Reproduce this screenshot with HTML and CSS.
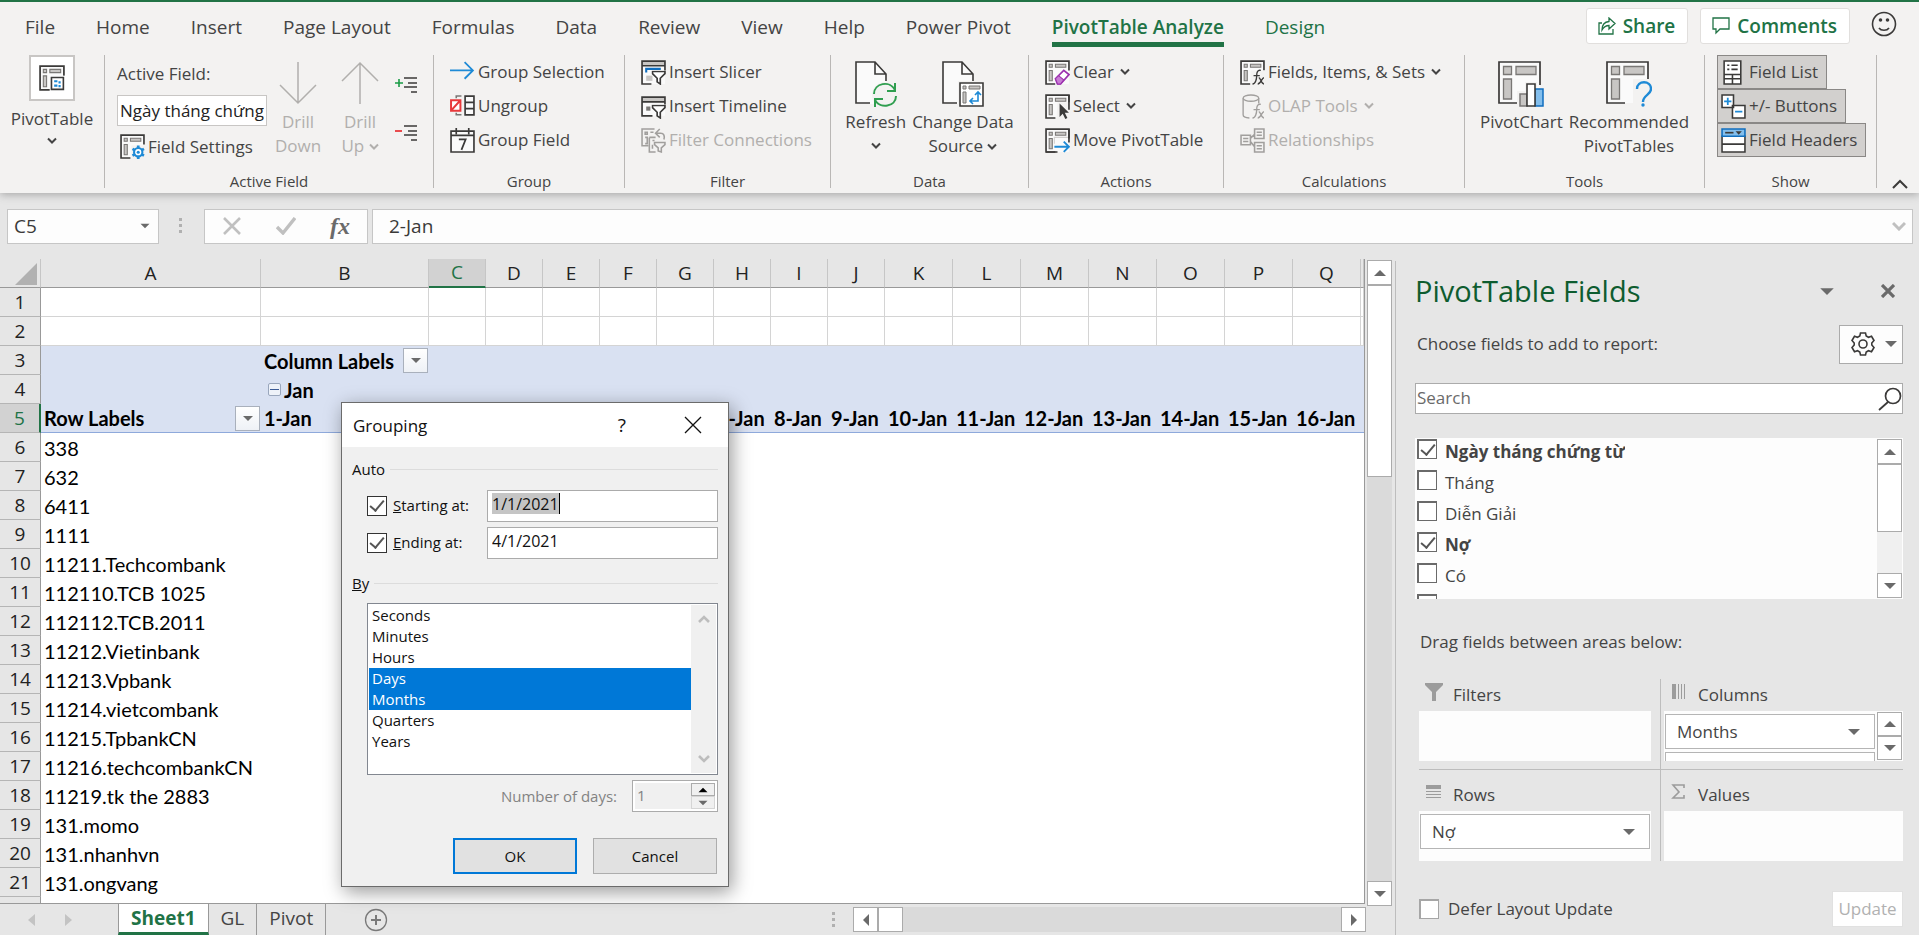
FILE: index.html
```html
<!DOCTYPE html>
<html lang="en">
<head>
<meta charset="utf-8">
<title>Sheet1 - PivotTable</title>
<link rel="stylesheet" href="styles.css">
</head>
<body>
<svg class="defs" aria-hidden="true">
  <symbol id="chev" viewBox="0 0 10 8"><path d="M1 1.5 5 5.5 9 1.5" fill="none" stroke="currentColor" stroke-width="2"/></symbol>
  <symbol id="pivot" viewBox="0 0 24 24"><path d="M1 1h22v22H1z" fill="#fafafa"/><path d="M23 10V1H1v22h9" fill="none" stroke="#3b3a39" stroke-width="1.6"/><path d="M4 4h3v3H4zM10 4h10v3H10zM4 10h3v10H4z" fill="#c8c6c4" stroke="#797775"/></symbol>
  <symbol id="sheet" viewBox="0 0 42 46"><path d="M1 1h20l10 12v30H1z" fill="#fafafa"/><path d="M31 20V13L20 1H1v41h14M20 1v12h11" fill="none" stroke="#3b3a39" stroke-width="1.6"/></symbol>
  <symbol id="bigpivot" viewBox="0 0 46 46"><path d="M1 1h41v41H1z" fill="#fafafa"/><path d="M42 24V1H1v41h18" fill="none" stroke="#3b3a39" stroke-width="1.7"/><path d="M5.500 5.500h8v8h-8zM18 5.500h20v8H18zM5.500 18h8v20h-8z" fill="#c8c6c4" stroke="#797775" stroke-width="1.300"/></symbol>
  <symbol id="funnel" viewBox="0 0 14 14"><path d="M1 1h12v2L8.500 7.500V13L5.500 11V7.500L1 3z" fill="#fff" stroke="#3b3a39" stroke-width="1.600"/></symbol>
  <symbol id="tri" viewBox="0 0 12 8"><path d="M0 1h12L6 7z" fill="currentColor"/></symbol>
</svg>

<header class="ribbon">
  <nav class="tabs">
    <a href="#">File</a><a href="#">Home</a><a href="#">Insert</a><a href="#">Page Layout</a><a href="#">Formulas</a><a href="#">Data</a><a href="#">Review</a><a href="#">View</a><a href="#">Help</a><a href="#">Power Pivot</a><a href="#" class="active">PivotTable Analyze</a><a href="#" class="ctx">Design</a>
    <div class="tab-actions">
      <button class="pill"><svg width="18" height="18" viewBox="0 0 18 18" fill="none" stroke="#217346" stroke-width="1.300"><path d="M4 6H1v11h14v-5"/><path d="M11 1v3.500C6 5 4 8 4 13c2-3.500 4-4.500 7-4.500V12l6-5.500z"/></svg>Share</button>
      <button class="pill"><svg width="18" height="18" viewBox="0 0 18 18" fill="none" stroke="#217346" stroke-width="1.300"><path d="M1 1h16v11H8l-4 4v-4H1z"/></svg>Comments</button>
      <button class="smile" aria-label="Feedback"><svg width="26" height="26" viewBox="0 0 26 26" fill="none" stroke="#3b3a39" stroke-width="1.600"><circle cx="13" cy="13" r="11.500"/><path d="M8 17c2 3 8 3 10 0"/><circle cx="9.500" cy="9" r="1" fill="#3b3a39"/><circle cx="16.500" cy="9" r="1" fill="#3b3a39"/></svg></button>
    </div>
  </nav>
  <div class="groups">
    <section class="group">
      <button class="big"><span class="framed"><svg width="26" height="26" viewBox="0 0 24 24"><use href="#pivot"/><path d="M10 10h14v14H10z" fill="#fff"/><path d="M11.500 11.500h11v11h-11z" fill="#fff" stroke="#3b3a39" stroke-width="1.500"/><path d="M14 14h3v2h-3zM18 15h2v2h-2zM14 18h3v2h-3zM18 18.500h2v2h-2z" fill="#1e8ad6"/></svg></span><span>PivotTable</span><svg class="chev"><use href="#chev"/></svg></button>
    </section>
    <section class="group">
      <div class="body field-body">
        <div class="field-col">
          <label for="af">Active Field:</label>
          <input id="af" type="text" value="Ngày tháng chứng từ">
          <button class="row"><svg width="25" height="25" viewBox="0 0 24 24"><use href="#pivot"/><path d="M11 11h13v13H11z" fill="#f3f2f1"/><circle cx="17.500" cy="17.500" r="4" fill="#fff" stroke="#1e8ad6" stroke-width="2"/><circle cx="17.500" cy="17.500" r="1.500" fill="#1e8ad6"/><path d="M17.500 11v3M17.500 21v3M12 14.300l2.500 1.400M20.500 19.300l2.500 1.400M12 20.700l2.500-1.400M20.500 15.700l2.500-1.400" stroke="#1e8ad6" stroke-width="2.600"/></svg>Field Settings</button>
        </div>
        <button class="big off" disabled><svg width="38" height="44" viewBox="0 0 38 44"><path d="M19 1v41M1 24l18 18 18-18" fill="none" stroke="#b1afad" stroke-width="1.500"/></svg><span>Drill</span><span>Down</span></button>
        <button class="big off" disabled><svg width="38" height="44" viewBox="0 0 38 44"><path d="M19 43V2M1 20 19 2l18 18" fill="none" stroke="#b1afad" stroke-width="1.500"/></svg><span>Drill</span><span>Up <svg class="chev"><use href="#chev"/></svg></span></button>
        <div class="expand">
          <button aria-label="Expand Field"><svg width="22" height="18" viewBox="0 0 22 18"><path d="M9 2h13M13 7h9M9 11h13M16 16h6" stroke="#3b3a39" stroke-width="1.500"/><path d="M0 7h8M4 3v8" stroke="#1a9c46" stroke-width="1.600"/></svg></button>
          <button aria-label="Collapse Field"><svg width="22" height="18" viewBox="0 0 22 18"><path d="M9 2h13M13 7h9M9 11h13M16 16h6" stroke="#3b3a39" stroke-width="1.500"/><path d="M0 7h7" stroke="#e8393b" stroke-width="1.800"/></svg></button>
        </div>
      </div>
      <h2>Active Field</h2>
    </section>
    <section class="group">
      <div class="body stack">
        <button class="row"><svg width="25" height="25" viewBox="0 0 24 24"><path d="M0 10h22M14 2l8 8-8 8" fill="none" stroke="#1e8ad6" stroke-width="1.700"/></svg>Group Selection</button>
        <button class="row"><svg width="25" height="25" viewBox="0 0 24 24"><path d="M14.500 2h8.500v18h-8.500zM14.500 8H23M14.500 14H23" fill="#fafafa" stroke="#3b3a39" stroke-width="1.600"/><path d="M6 4V2h5M6 18v2h5" fill="none" stroke="#797775" stroke-width="1.500"/><path d="M1 6h9v10H1zM1 16 10 6" fill="#fff" stroke="#e8393b" stroke-width="1.900"/></svg>Ungroup</button>
        <button class="row"><svg width="25" height="25" viewBox="0 0 24 24"><path d="M1 3h22v20H1zM1 7h22M6 0v6M18 0v6" fill="#fafafa" stroke="#3b3a39" stroke-width="1.600"/><path d="M8.500 11H15l-4 10" fill="none" stroke="#3b3a39" stroke-width="1.700"/></svg>Group Field</button>
      </div>
      <h2>Group</h2>
    </section>
    <section class="group">
      <div class="body stack">
        <button class="row"><svg width="25" height="25" viewBox="0 0 24 24"><path d="M1 1h22v22H1z" fill="#fafafa"/><path d="M1 1h22v4H1z" fill="#c8c6c4"/><path d="M10 23H1V1h22v9M1 5.500h22" fill="none" stroke="#3b3a39" stroke-width="1.600"/><path d="M5 12V8.500h14" fill="none" stroke="#106ebe" stroke-width="2"/><path d="M5 15h6v5H5z" fill="#c8c6c4"/><use href="#funnel" x="10" y="10" width="14" height="14"/></svg>Insert Slicer</button>
        <button class="row"><svg width="25" height="25" viewBox="0 0 24 24"><path d="M1 3h22v18H1z" fill="#fafafa"/><path d="M1 3h22v4H1z" fill="#c8c6c4"/><path d="M11 21H1V3h22v7M1 7.500h22" fill="none" stroke="#3b3a39" stroke-width="1.600"/><path d="M5 12h4v4H5z" fill="#797775"/><use href="#funnel" x="10" y="10" width="14" height="14"/></svg>Insert Timeline</button>
        <button class="row off" disabled><svg width="25" height="25" viewBox="0 0 24 24" fill="none" stroke="#a19f9d" stroke-width="1.500"><path d="M7 17H1V1h12M4 4h2v2H4zM4 9h2v6H4M9 4h3M8 9h6M8 9v14h6M11 12h2M11 16v4M15 5h4c3 0 4 3 3 6M18 1l-4 4 4 4"/><path d="M13 14h10v2l-3.500 3v4l-3-1v-3L13 16z" fill="#f3f2f1"/></svg>Filter Connections</button>
      </div>
      <h2>Filter</h2>
    </section>
    <section class="group">
      <div class="body pair">
        <button class="big"><svg width="42" height="46" viewBox="0 0 42 46"><use href="#sheet"/><circle cx="30" cy="34" r="13" fill="#f3f2f1"/><path d="M19 33c0-11 16-14 21-4M40 22v8h-8M41 35c0 11-16 13-21 4M20 46v-8h8" fill="none" stroke="#2f9e4f" stroke-width="2"/></svg><span>Refresh</span><svg class="chev"><use href="#chev"/></svg></button>
        <button class="big"><svg width="42" height="46" viewBox="0 0 42 46"><use href="#sheet"/><path d="M16 20h26v26H16z" fill="#f3f2f1"/><path d="M18 22h23v23H18z" fill="#fff" stroke="#3b3a39" stroke-width="1.600"/><path d="M21 25h3v3h-3zM27 25h11v3H27zM21 31h3v11h-3z" fill="#c8c6c4" stroke="#797775"/><path d="M36 31v9h-8M33 34l3-3 3 3M31 37l-3 3 3 3" fill="none" stroke="#1e8ad6" stroke-width="1.600"/></svg><span>Change Data</span><span>Source <svg class="chev"><use href="#chev"/></svg></span></button>
      </div>
      <h2>Data</h2>
    </section>
    <section class="group">
      <div class="body stack">
        <button class="row"><svg width="25" height="25" viewBox="0 0 24 24"><use href="#pivot"/><path d="M10 18 19 9l5 5-9 10h-5z" fill="#f3f2f1"/><path d="m10 18 8-8 5 4-8 9h-3z" fill="#fff" stroke="#9b2fae" stroke-width="1.600"/><path d="m10 18 3-3 5 4-3 4h-3z" fill="#c77dd3" stroke="#9b2fae"/></svg>Clear<svg class="chev"><use href="#chev"/></svg></button>
        <button class="row"><svg width="25" height="25" viewBox="0 0 24 24"><use href="#pivot"/><path d="M12 8h12v16H11z" fill="#f3f2f1"/><path d="M23 1v14" stroke="#3b3a39" stroke-width="1.600"/><path d="M14 9v13l3-3 2.500 5 2-1-2.500-5h4z" fill="#3b3a39"/></svg>Select<svg class="chev"><use href="#chev"/></svg></button>
        <button class="row"><svg width="25" height="25" viewBox="0 0 24 24"><use href="#pivot"/><path d="M9 15V9h13" fill="none" stroke="#d2d0ce"/><path d="M23 1v13M1 23h11" stroke="#3b3a39" stroke-width="1.600"/><path d="M9 18h14M18 13l5 5-5 5" fill="none" stroke="#1e8ad6" stroke-width="1.800"/></svg>Move PivotTable</button>
      </div>
      <h2>Actions</h2>
    </section>
    <section class="group">
      <div class="body stack">
        <button class="row"><svg width="25" height="25" viewBox="0 0 24 24"><use href="#pivot"/><path d="M10 10h14v14H10z" fill="#f3f2f1"/><path d="M20 10c-3-1-4 2-4 5s-1 8-4 8M13 15h6M18 17c2 0 2 6 5 6M23 17c-2 0-3 6-6 6" fill="none" stroke="#3b3a39" stroke-width="1.300"/></svg>Fields, Items, &amp; Sets<svg class="chev"><use href="#chev"/></svg></button>
        <button class="row off" disabled><svg width="25" height="25" viewBox="0 0 24 24" fill="none" stroke="#a19f9d" stroke-width="1.300"><path d="M3 4v16c0 2 3 3 6 3M18 4v5"/><ellipse cx="10.500" cy="4" rx="7.500" ry="3"/><path d="M20 10c-3-1-4 2-4 5s-1 8-4 8M13 15h6M18 17c2 0 2 6 5 6M23 17c-2 0-3 6-6 6"/></svg>OLAP Tools<svg class="chev"><use href="#chev"/></svg></button>
        <button class="row off" disabled><svg width="25" height="25" viewBox="0 0 24 24" fill="none" stroke="#a19f9d" stroke-width="1.500"><path d="M1 7h9v9H1zM14 1h9v9h-9zM14 14h9v9h-9zM10 10l4-4M10 13l4 5M3 10h5M3 13h5M16 4h5M16 7h5M16 17h5M16 20h5"/></svg>Relationships</button>
      </div>
      <h2>Calculations</h2>
    </section>
    <section class="group">
      <div class="body pair">
        <button class="big"><svg width="46" height="46" viewBox="0 0 46 46"><use href="#bigpivot"/><path d="M19 30h8V21h12v6h7v19H19z" fill="#f3f2f1"/><path d="M22 33h7v12h-7z" fill="#c8c6c4" stroke="#797775" stroke-width="1.500"/><path d="M37 28h8v17h-8z" fill="#83beec" stroke="#106ebe" stroke-width="1.500"/><path d="M29 23h8v22h-8z" fill="#fff" stroke="#3b3a39" stroke-width="1.600"/></svg><span>PivotChart</span></button>
        <button class="big"><svg width="46" height="46" viewBox="0 0 46 46"><use href="#bigpivot"/><path d="M27 18h19v28H27z" fill="#f3f2f1"/><path d="M31 28c0-9 14-9 14 0 0 6-8 6-8 13" fill="none" stroke="#1e8ad6" stroke-width="2.400"/><circle cx="37" cy="44" r="1.700" fill="#1e8ad6"/></svg><span>Recommended</span><span>PivotTables</span></button>
      </div>
      <h2>Tools</h2>
    </section>
    <section class="group">
      <div class="body stack toggles">
        <button class="row" aria-pressed="true"><svg width="25" height="25" viewBox="0 0 24 24"><path d="M3 1h16v22H3zM3 14h16M3 18h16M11 14v9" fill="#fff" stroke="#3b3a39" stroke-width="1.500"/><path d="M6 5h2M10 5h6M6 9h2M10 9h6" stroke="#3b3a39" stroke-width="1.500"/></svg>Field List</button>
        <button class="row" aria-pressed="true"><svg width="25" height="25" viewBox="0 0 24 24"><path d="M1 1h11v12H1zM11 11h12v12H11z" fill="#fff" stroke="#3b3a39" stroke-width="1.500"/><path d="M3 7h7M6.500 3.500v7M13.500 17h7" stroke="#1e8ad6" stroke-width="1.700"/></svg>+/- Buttons</button>
        <button class="row" aria-pressed="true"><svg width="25" height="25" viewBox="0 0 24 24"><path d="M1 8h22v15H1zM1 15.500h22" fill="#fff" stroke="#3b3a39" stroke-width="1.500"/><path d="M1 1h22v7H1z" fill="#83beec" stroke="#106ebe" stroke-width="1.500"/><path d="M4 4.500h8" stroke="#3b3a39" stroke-width="1.600"/><path d="M14 3h6l-3 3.500z" fill="#3b3a39"/></svg>Field Headers</button>
      </div>
      <h2>Show</h2>
    </section>
    <button class="collapse" aria-label="Collapse ribbon"><svg width="16" height="10" viewBox="0 0 16 10"><path d="m1 9 7-7 7 7" fill="none" stroke="#3b3a39" stroke-width="2"/></svg></button>
  </div>
</header>

<div class="formula-bar">
  <div class="name-box"><input type="text" value="C5" aria-label="Name box"><svg class="tri"><use href="#tri"/></svg></div>
  <span class="grip"></span>
  <div class="fx">
    <button aria-label="Cancel"><svg width="20" height="18" viewBox="0 0 20 18"><path d="m2 1 16 16M18 1 2 17" stroke="#c0c0c0" stroke-width="2.600"/></svg></button>
    <button aria-label="Enter"><svg width="20" height="18" viewBox="0 0 20 18"><path d="m1 10 6 6L19 1" fill="none" stroke="#c0c0c0" stroke-width="3.400"/></svg></button>
    <button aria-label="Insert function" class="fx-f">fx</button>
  </div>
  <div class="formula"><input type="text" value="2-Jan" aria-label="Formula"><svg width="14" height="10" viewBox="0 0 14 10"><path d="m1 2 6 6 6-6" fill="none" stroke="#c0c0c0" stroke-width="3"/></svg></div>
</div>

<main class="work">
  <div class="book">
    <div class="sheet">
      <table>
        <colgroup><col class="c-h"><col class="c-a"><col class="c-b"><col span="8" class="c-s"><col span="7" class="c-m"><col></colgroup>
        <thead><tr><th class="corner"><svg width="22" height="22" viewBox="0 0 22 22"><path d="M22 0v22H0z" fill="#b1b1b1"/></svg></th><th>A</th><th>B</th><th class="sel">C</th><th>D</th><th>E</th><th>F</th><th>G</th><th>H</th><th>I</th><th>J</th><th>K</th><th>L</th><th>M</th><th>N</th><th>O</th><th>P</th><th>Q</th><th></th></tr></thead>
        <tbody>
          <tr class="lined"><th>1</th><td></td><td></td><td></td><td></td><td></td><td></td><td></td><td></td><td></td><td></td><td></td><td></td><td></td><td></td><td></td><td></td><td></td><td></td></tr>
          <tr class="lined"><th>2</th><td></td><td></td><td></td><td></td><td></td><td></td><td></td><td></td><td></td><td></td><td></td><td></td><td></td><td></td><td></td><td></td><td></td><td></td></tr>
          <tr class="head"><th>3</th><td></td><td><div class="cell">Column Labels<button class="filter" aria-label="Filter columns"><svg class="tri"><use href="#tri"/></svg></button></div></td><td colspan="16"></td></tr>
          <tr class="head"><th>4</th><td></td><td><div class="cell jan"><button class="minus" aria-label="Collapse Jan"></button>Jan</div></td><td colspan="16"></td></tr>
          <tr class="head last"><th class="sel">5</th><td><div class="cell">Row Labels<button class="filter" aria-label="Filter rows"><svg class="tri"><use href="#tri"/></svg></button></div></td><td>1-Jan</td><td></td><td></td><td></td><td></td><td></td><td>7-Jan</td><td>8-Jan</td><td>9-Jan</td><td>10-Jan</td><td>11-Jan</td><td>12-Jan</td><td>13-Jan</td><td>14-Jan</td><td>15-Jan</td><td>16-Jan</td><td></td></tr>
          <tr><th>6</th><td>338</td></tr>
          <tr><th>7</th><td>632</td></tr>
          <tr><th>8</th><td>6411</td></tr>
          <tr><th>9</th><td>1111</td></tr>
          <tr><th>10</th><td>11211.Techcombank</td></tr>
          <tr><th>11</th><td>112110.TCB 1025</td></tr>
          <tr><th>12</th><td>112112.TCB.2011</td></tr>
          <tr><th>13</th><td>11212.Vietinbank</td></tr>
          <tr><th>14</th><td>11213.Vpbank</td></tr>
          <tr><th>15</th><td>11214.vietcombank</td></tr>
          <tr><th>16</th><td>11215.TpbankCN</td></tr>
          <tr><th>17</th><td>11216.techcombankCN</td></tr>
          <tr><th>18</th><td>11219.tk the 2883</td></tr>
          <tr><th>19</th><td>131.momo</td></tr>
          <tr><th>20</th><td>131.nhanhvn</td></tr>
          <tr><th>21</th><td>131.ongvang</td></tr>
          <tr><th></th><td></td></tr>
        </tbody>
      </table>
    </div>
    <div class="vbar main-v"><button aria-label="Scroll up"><svg class="tri up"><use href="#tri"/></svg></button><span class="thumb"></span><button class="end" aria-label="Scroll down"><svg class="tri"><use href="#tri"/></svg></button></div>
    <footer class="sheets">
      <div class="arrows"><svg width="8" height="12" viewBox="0 0 8 12"><path d="M7 0v12L0 6z" fill="#c3c3c3"/></svg><svg width="8" height="12" viewBox="0 0 8 12"><path d="M1 0v12l7-6z" fill="#c3c3c3"/></svg></div>
      <a href="#" class="cur">Sheet1</a><a href="#">GL</a><a href="#">Pivot</a>
      <button class="add" aria-label="New sheet"><svg width="24" height="24" viewBox="0 0 24 24" fill="none" stroke="#797979" stroke-width="1.300"><circle cx="12" cy="12" r="10.500"/><path d="M12 7v10M7 12h10" stroke-width="2"/></svg></button>
      <span class="grip"></span>
      <div class="hbar"><button aria-label="Scroll left"><svg class="tri left"><use href="#tri"/></svg></button><span class="thumb"></span><button class="end" aria-label="Scroll right"><svg class="tri right"><use href="#tri"/></svg></button></div>
    </footer>
  </div>

  <aside class="pane">
    <div class="pane-title"><h1>PivotTable Fields</h1><svg class="tri wide"><use href="#tri"/></svg><button aria-label="Close"><svg width="14" height="14" viewBox="0 0 14 14"><path d="m1 1 12 12M13 1 1 13" stroke="#6a6a6a" stroke-width="3.200"/></svg></button></div>
    <div class="choose"><span>Choose fields to add to report:</span><button aria-label="Tools"><svg width="24" height="24" viewBox="0 0 24 24" fill="none" stroke="#3b3a39" stroke-width="1.600"><path d="M9.500 1h5l.7 3 2.300 1.300 3-1L23 8.500 20.800 11v2l2.200 2.500-2.500 4.200-3-1-2.300 1.300-.7 3h-5l-.7-3-2.300-1.300-3 1L1 15.500 3.200 13v-2L1 8.500l2.500-4.200 3 1L8.800 4z"/><circle cx="12" cy="12" r="4"/></svg><svg class="tri"><use href="#tri"/></svg></button></div>
    <div class="search"><input type="text" placeholder="Search" aria-label="Search"><svg width="24" height="24" viewBox="0 0 24 24" fill="none" stroke="#3b3a39" stroke-width="1.700"><circle cx="15" cy="9" r="7.500"/><path d="M10 15 1 23"/></svg></div>
    <div class="fields">
      <div class="checks">
        <label class="on"><input type="checkbox" checked>Ngày tháng chứng từ</label>
        <label><input type="checkbox">Tháng</label>
        <label><input type="checkbox">Diễn Giải</label>
        <label class="on"><input type="checkbox" checked>Nợ</label>
        <label><input type="checkbox">Có</label>
        <label><input type="checkbox" aria-label="Next field"></label>
      </div>
      <div class="vbar list-v"><button aria-label="Scroll up"><svg class="tri up"><use href="#tri"/></svg></button><span class="thumb"></span><button class="end" aria-label="Scroll down"><svg class="tri"><use href="#tri"/></svg></button></div>
    </div>
    <p class="drag">Drag fields between areas below:</p>
    <div class="areas">
      <div class="area"><h3><svg width="18" height="18" viewBox="0 0 18 18"><path d="M0 0h18v2l-7 7v9H7V9L0 2z" fill="#9c9c9c"/></svg>Filters</h3><div class="well"></div></div>
      <div class="area"><h3><svg width="18" height="18" viewBox="0 0 18 18"><path d="M2 1h4v15H2zM8 1h1v15H8zM11 1h1v15h-1zM14 1h1v15h-1z" fill="#9c9c9c"/></svg>Columns</h3><div class="well split"><div class="items"><button>Months<svg class="tri"><use href="#tri"/></svg></button><button aria-label="Next column field"></button></div><div class="spin"><button aria-label="Up"><svg class="tri up"><use href="#tri"/></svg></button><button aria-label="Down"><svg class="tri"><use href="#tri"/></svg></button></div></div></div>
      <div class="area"><h3><svg width="18" height="18" viewBox="0 0 18 18"><path d="M1 2h15v4H1zM1 8h15v1H1zM1 11h15v1H1zM1 14h15v1H1z" fill="#9c9c9c"/></svg>Rows</h3><div class="well"><div class="items"><button>Nợ<svg class="tri"><use href="#tri"/></svg></button></div></div></div>
      <div class="area"><h3><svg width="18" height="18" viewBox="0 0 18 18"><path d="M14 5V2H3l6 7-6 6h11v-3" fill="none" stroke="#9c9c9c" stroke-width="1.600"/></svg>Values</h3><div class="well"></div></div>
    </div>
    <div class="defer"><label><input type="checkbox">Defer Layout Update</label><button disabled>Update</button></div>
  </aside>
</main>

<div class="dialog" role="dialog" aria-label="Grouping">
  <div class="dlg-title"><span>Grouping</span><button aria-label="Help" class="help">?</button><button aria-label="Close"><svg width="18" height="18" viewBox="0 0 18 18"><path d="m1 1 16 16M17 1 1 17" stroke="#111" stroke-width="1.300"/></svg></button></div>
  <div class="dlg-body">
    <div class="legend">Auto</div>
    <div class="dlg-row"><label><input type="checkbox" checked><span><u>S</u>tarting at:</span></label><input type="text" class="hot" value="1/1/2021" aria-label="Starting at"></div>
    <div class="dlg-row"><label><input type="checkbox" checked><span><u>E</u>nding at:</span></label><input type="text" value="4/1/2021" aria-label="Ending at"></div>
    <div class="legend by"><label for="by"><u>B</u>y</label></div>
    <div class="listbox">
      <select id="by" multiple size="8"><option>Seconds</option><option>Minutes</option><option>Hours</option><option selected>Days</option><option selected>Months</option><option>Quarters</option><option>Years</option></select>
      <div class="faint"><svg width="12" height="10" viewBox="0 0 12 10"><path d="m1 8 5-5 5 5" fill="none" stroke="#bdbdbd" stroke-width="2.600"/></svg><svg width="12" height="10" viewBox="0 0 12 10"><path d="m1 2 5 5 5-5" fill="none" stroke="#bdbdbd" stroke-width="2.600"/></svg></div>
    </div>
    <div class="days"><label for="nd">Number of days:</label><div class="spinner"><input id="nd" type="text" value="1" disabled><div><button aria-label="More"><svg class="tri up"><use href="#tri"/></svg></button><button aria-label="Fewer" class="dim"><svg class="tri"><use href="#tri"/></svg></button></div></div></div>
    <div class="dlg-btns"><button class="ok">OK</button><button>Cancel</button></div>
  </div>
</div>
</body>
</html>
```

FILE: styles.css
```css
* { box-sizing: border-box; }
html, body { height: 100%; }
body {
  margin: 0;
  display: flex;
  flex-direction: column;
  overflow: hidden;
  background: #e6e6e6;
  color: #444;
  font-family: "Open Sans", "Noto Sans", sans-serif;
  font-size: 17px;
}
button, input, select { font: inherit; color: inherit; margin: 0; padding: 0; border-radius: 0; }
button { background: none; border: 0; }
input { min-width: 0; outline: 0; }
a { color: inherit; text-decoration: none; }
h1, h2, h3, p { margin: 0; font-weight: 400; }
svg { flex: none; display: block; }
.defs { position: absolute; width: 0; height: 0; }
.chev { display: inline-block; width: 10px; height: 8px; vertical-align: middle; }
.tri { width: 12px; height: 8px; color: #6a6a6a; }
.tri.up { transform: rotate(180deg); }
.tri.left { transform: rotate(90deg); }
.tri.right { transform: rotate(-90deg); }
.tri.wide { width: 14px; height: 9px; }

/* Ribbon */
.ribbon { position: relative; flex: none; background: #f3f2f1; border-top: 2px solid #217346; box-shadow: 0 2px 8px #aaa; }
.tabs { display: flex; align-items: flex-start; height: 50px; padding: 0 22px 0 25px; gap: 41px; font-size: 19px; line-height: 50px; white-space: nowrap; }
.tabs a { height: 45px; }
.tabs .active { font-weight: 600; color: #217346; border-bottom: 5px solid #217346; }
.tabs .ctx { color: #217346; }
.tab-actions { display: flex; gap: 12px; margin-left: auto; padding-top: 6px; align-items: center; line-height: 24px; }
.pill { display: flex; align-items: center; gap: 7px; height: 36px; padding: 0 12px 0 11px; background: #fff; border: 1px solid #e1dfdd; border-radius: 3px; color: #217346; font-weight: 600; }
.smile { margin: 0 0 4px 9px; }
.groups { display: grid; grid-template-columns: 105px 329px 191px 206px 198px 195px 241px 240px 172px 1fr; height: 141px; padding-top: 3px; }
.group { display: flex; flex-direction: column; justify-content: space-between; height: 133px; border-right: 1px solid #b9b7b5; white-space: nowrap; }
.group h2 { font-size: 15px; line-height: 14px; text-align: center; }
.body { display: flex; height: 104px; }
.stack { flex-direction: column; align-items: flex-start; padding-left: 16px; }
.row { display: flex; align-items: center; gap: 3px; height: 34px; line-height: 24px; }
.row .chev { margin-left: 3px; }
.big { display: flex; flex-direction: column; align-items: center; line-height: 24px; }
.off { color: #b1afad; }
.framed { display: grid; place-items: center; width: 46px; height: 46px; margin-bottom: 6px; background: #fff; border: 2px solid #c8c6c4; }
.group > .big > .chev { margin-top: 6px; }
.field-body { padding-left: 12px; }
.field-body > .big { width: 62px; padding-top: 6px; }
.field-body > .big > svg { margin-bottom: 5px; }
.field-col { display: flex; flex-direction: column; width: 150px; line-height: 24px; }
.field-col label { padding: 7px 0 9px; }
.field-col input { height: 34px; padding: 0 2px; border: 1px solid #c8c6c4; background: #fff; color: #222; }
.field-col .row { padding: 8px 0 0 3px; }
.expand { display: flex; flex-direction: column; gap: 30px; padding: 21px 0 0 4px; }
.pair { justify-content: center; gap: 6px; }
.pair .big { padding-top: 6px; }
.pair .big > svg:first-child { margin-bottom: 3px; }
.pair .big > .chev { margin-top: 8px; }
.toggles { padding-left: 12px; }
.toggles .row { padding: 0 8px 0 3px; background: #d2d0ce; border: 1px solid #8a8886; }
.collapse { align-self: end; justify-self: end; padding: 0 11px 4px 0; }

/* Formula bar */
.formula-bar { display: flex; flex: none; align-items: center; height: 66px; padding: 16px 6px 16px 7px; color: #3b3a39; font-size: 19px; }
.formula-bar > div { display: flex; align-items: center; height: 35px; background: #fdfdfd; border: 1px solid #c6c6c6; }
.formula-bar input { flex: 1; border: 0; background: none; }
.formula-bar .name-box { width: 152px; padding: 0 8px 0 6px; }
.name-box .tri { width: 10px; height: 6px; }
.grip { width: 3px; height: 16px; background: repeating-linear-gradient(#b0b0b0 0 3px, transparent 3px 6px); }
.formula-bar .grip { margin: 0 22px 0 20px; }
.formula-bar .fx { width: 164px; justify-content: space-around; margin-right: 4px; }
.fx-f { font: italic bold 24px/24px "Liberation Serif", serif; color: #6a6a6a; }
.formula-bar .formula { flex: 1; padding: 0 6px 0 16px; }

/* Worksheet */
.work { display: grid; grid-template-columns: minmax(0, 1fr) 524px; flex: 1; min-height: 0; }
.book { display: grid; grid-template-columns: minmax(0, 1fr) 30px; grid-template-rows: minmax(0, 1fr) 31px; min-height: 0; }
.sheet { overflow: hidden; border-right: 1px solid #999; border-bottom: 1px solid #999; background: linear-gradient(#e6e6e6 29px, #fff 29px); }
table { width: 100%; table-layout: fixed; border-collapse: separate; border-spacing: 0; color: #000; font-family: Lato, "Open Sans", sans-serif; font-size: 20px; font-variant-ligatures: none; }
.c-h { width: 41px; } .c-a { width: 220px; } .c-b { width: 168px; } .c-s { width: 57px; } .c-m { width: 68px; }
th { height: 29px; padding: 0; background: #e6e6e6; border-right: 1px solid #c6c6c6; font: 19px/28px "Open Sans", sans-serif; color: #222; }
thead th { border-bottom: 1px solid #999; }
tbody th { border-right-color: #999; border-bottom: 1px solid #b5b5b5; }
.corner svg { margin: 2px 3px 0 auto; }
th.sel { background: #d2d2d2; color: #217346; }
thead th.sel { border-bottom: 2px solid #217346; line-height: 27px; }
tbody th.sel { border-right: 2px solid #217346; }
td { height: 29px; padding: 0 0 0 3px; line-height: 28px; white-space: nowrap; }
.lined td { border-right: 1px solid #d4d4d4; border-bottom: 1px solid #d4d4d4; }
.head td { background: #d9e1f2; font-weight: 700; }
.last td { border-bottom: 1px solid #8ea9db; line-height: 27px; }
.cell { display: flex; align-items: center; justify-content: space-between; height: 28px; padding-right: 1px; }
.jan { justify-content: flex-start; gap: 3px; padding-left: 4px; }
.filter { display: grid; place-items: center; width: 25px; height: 25px; background: linear-gradient(#fff, #eef1f6); border: 1px solid #a9b0bc; }
.filter .tri { width: 10px; height: 7px; }
.minus { width: 13px; height: 13px; border: 1px solid #9aa7bd; border-radius: 2px; background: linear-gradient(#3b5a95, #3b5a95) center / 9px 1px no-repeat #eef2f9; }

.vbar { display: flex; flex-direction: column; background: #dadada; }
.vbar button, .hbar button, .thumb, .spin button { display: grid; place-items: center; flex: none; width: 25px; height: 25px; background: #fff; border: 1px solid #ababab; }
.vbar .end, .hbar .end { margin-top: auto; }
.main-v { width: 25px; margin: 1px 0 -2px 2px; }
.main-v .thumb { height: 192px; }
.sheets { grid-column: 1 / -1; display: flex; align-items: center; padding-right: 29px; font-size: 19px; line-height: 28px; }
.arrows { display: flex; gap: 28px; width: 118px; padding-left: 28px; }
.sheets a { height: 31px; padding: 0 12px; border-right: 1px solid #999; }
.sheets a.cur { background: #fff; color: #217346; font-weight: 700; border-left: 1px solid #999; border-bottom: 3px solid #217346; }
.add { margin-left: 38px; }
.sheets .grip { margin-left: auto; margin-right: 18px; }
.hbar { display: flex; width: 513px; background: #dadada; }
.hbar .end { margin-left: auto; margin-top: 0; }

/* Field list pane */
.pane { display: flex; flex-direction: column; border-left: 1px solid #bdbdbd; margin-top: 2px; padding: 0 16px 8px 19px; min-height: 0; font-size: 17px; line-height: 24px; }
.pane-title { display: flex; align-items: center; height: 60px; padding: 0 8px 0 0; }
.pane-title h1 { flex: 1; font-size: 29px; line-height: 36px; color: #0e5c2f; }
.pane-title button { margin-left: 47px; }
.choose { display: flex; align-items: center; justify-content: space-between; height: 46px; padding-left: 2px; }
.choose button { display: flex; align-items: center; justify-content: flex-end; gap: 10px; width: 64px; height: 39px; padding-right: 5px; background: #fdfdfd; border: 1px solid #ababab; }
.search { display: flex; align-items: center; height: 31px; margin-top: 16px; background: #fff; border: 1px solid #ababab; }
.search input { flex: 1; border: 0; padding: 0 0 2px 1px; background: none; }
.search input::placeholder { color: #6a6a6a; opacity: 1; }
.fields { display: flex; justify-content: space-between; height: 161px; margin-top: 24px; padding: 1px 1px 1px 2px; background: #fdfdfd; overflow: hidden; }
.checks { height: 160px; overflow: hidden; }
.checks label { display: flex; align-items: flex-start; gap: 8px; height: 31px; line-height: 26px; }
.checks .on { font-weight: 700; }
.fields .vbar { height: 159px; background: #f0f0f0; }
.list-v .thumb { height: 68px; }
input[type="checkbox"] { appearance: none; display: grid; place-items: center; flex: none; width: 20px; height: 20px; background: #fff; border: 2px solid #6a6a6a; border-width: 2px 1px 1px 2px; }
input[type="checkbox"]:checked::after { content: ""; width: 6px; height: 12px; margin-top: -4px; border: solid #555; border-width: 0 2px 2px 0; transform: rotate(40deg); }
.drag { margin-top: 31px; padding-left: 5px; }
.areas { display: grid; grid-template-columns: 242px 1fr; margin: 25px 0 0 4px; }
.area { height: 91px; padding-right: 9px; border-right: 1px solid #bdbdbd; border-bottom: 1px solid #bdbdbd; }
.area:nth-child(even) { padding: 0 0 0 3px; border-right: 0; }
.area:nth-child(n+3) { border-bottom: 0; padding-top: 9px; }
.area h3 { display: flex; gap: 10px; align-items: center; height: 32px; padding-left: 6px; font-size: 17px; line-height: 28px; }
.area h3 svg { margin-bottom: 6px; }
.well { height: 50px; background: #fdfdfd; padding: 3px 1px 0; overflow: hidden; }
.split { display: flex; justify-content: space-between; gap: 2px; }
.items { flex: 1; }
.items button { display: flex; align-items: center; justify-content: space-between; width: 100%; height: 35px; margin-bottom: 3px; padding: 0 14px 0 11px; background: #fff; border: 1px solid #b5b5b5; }
.spin button { height: 24px; }
.spin { margin-top: -2px; }
.defer { display: flex; align-items: center; justify-content: space-between; margin-top: auto; padding-left: 4px; }
.defer label { display: flex; align-items: center; gap: 9px; }
.defer input { border-color: #a6a6a6; }
.defer button { width: 71px; height: 36px; background: #fff; border: 1px solid #e1e1e1; color: #b1b1b1; }

/* Grouping dialog */
.dialog { position: absolute; left: 341px; top: 402px; width: 388px; background: #f0f0f0; border: 1px solid #6b6b6b; box-shadow: 3px 5px 18px rgba(0, 0, 0, .4); color: #111; font-size: 15px; line-height: 21px; }
.dlg-title { display: flex; align-items: center; height: 44px; padding: 0 26px 0 11px; background: #fff; font-size: 17px; }
.dlg-title span { flex: 1; }
.help { margin-right: 58px; font-size: 19px; }
.dlg-body { padding: 12px 10px 12px; }
.legend { display: flex; align-items: center; gap: 5px; }
.legend::after { content: ""; flex: 1; height: 1px; background: #dcdcdc; }
.by { margin-top: 14px; }
.dlg-row { display: flex; align-items: center; justify-content: space-between; height: 33px; margin-top: 9px; padding-left: 15px; }
.dlg-row + .dlg-row { margin-top: 4px; }
.dlg-row label { display: flex; align-items: center; gap: 6px; }
.dialog input[type="checkbox"] { border: 1px solid #333; }
.dlg-row input[type="text"] { width: 231px; height: 32px; padding: 0 4px 4px; border: 1px solid #ababab; background: #fff; font-size: 16px; }
.dlg-row input.hot[type="text"] { background: linear-gradient(90deg, #c5c5c5 67px, #000 67px) 4px 2px / 68px 21px no-repeat #fff; }
.listbox { display: flex; height: 172px; margin: 9px 0 5px 15px; padding: 1px; background: #fff; border: 1px solid #828790; }
select { flex: 1; height: 168px; border: 0; outline: 0; overflow: hidden; background: #fff; appearance: none; }
option { height: 21px; min-height: 21px; padding: 0 3px; line-height: 21px; }
option:checked { background: linear-gradient(#0078d7, #0078d7); color: #fff; -webkit-text-fill-color: #fff; }
.faint { display: flex; flex-direction: column; align-items: center; justify-content: space-between; width: 25px; padding: 9px 0; background: #f0f0f0; }
.days { display: flex; align-items: center; justify-content: flex-end; gap: 15px; color: #838383; }
.spinner { display: flex; width: 86px; height: 32px; padding: 2px; background: #fff; border: 1px solid #ababab; }
.spinner input { flex: 1; width: 40px; padding: 0 2px 2px; border: 0; background: #f0f0f0; }
.spinner div { width: 24px; }
.spinner button { display: grid; place-items: center; width: 24px; height: 13px; background: #f0f0f0; border: 1px solid #ababab; }
.spinner .tri { width: 10px; height: 6px; color: #000; }
.spinner .dim { border-color: #d5d5d5; }
.spinner .dim .tri { color: #6a6a6a; }
.dlg-btns { display: flex; justify-content: flex-end; gap: 16px; margin-top: 26px; padding-right: 1px; }
.dlg-btns button { width: 124px; height: 36px; background: #e1e1e1; border: 1px solid #adadad; }
.dlg-btns .ok { border: 2px solid #0078d7; }
```
